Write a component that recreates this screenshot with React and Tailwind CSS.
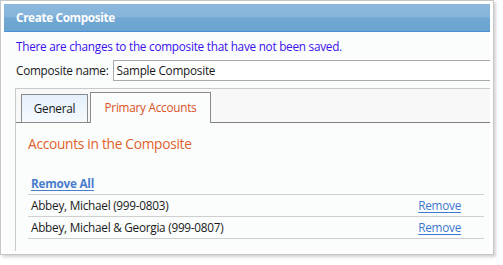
import React from "react";

const rows = [
  { name: "Abbey, Michael (999-0803)" },
  { name: "Abbey, Michael & Georgia (999-0807)" },
];

export default function App() {
  return (
    <div className="w-[503px] h-[265px] bg-white font-['Open_Sans',sans-serif] text-[11.75px] tracking-[-0.25px] text-[#1a1a1a]">
      <div className="w-[494px] h-[255px] border border-[#c6c6c6] bg-white p-[3px] shadow-[2px_2px_3px_rgba(0,0,0,0.18)] flex flex-col">
        {/* Title bar */}
        <div className="h-[28px] shrink-0 flex items-center pl-[12px] border-b border-[#4a92d6] bg-[linear-gradient(to_bottom,#8cb9dd_0%,#86b4da_48%,#70a7d3_52%,#6ca4d1_100%)]">
          <span className="text-white font-bold text-[11.75px] tracking-[-0.35px]">Create Composite</span>
        </div>

        {/* Body */}
        <div className="flex-1 bg-[#fbfdfd] overflow-hidden flex flex-col pl-[12px]">
          <div className="h-[28px] flex items-center pt-[1px] text-[#3a10ee]">
            There are changes to the composite that have not been saved.
          </div>
          <div className="flex items-center h-[21px] gap-[4px]">
            <span className="whitespace-nowrap">Composite name:</span>
            <div className="h-[21px] w-[400px] shrink-0 border border-[#a9a9a9] bg-white flex items-center pl-[3px]">
              Sample Composite
            </div>
          </div>

          {/* Tab container */}
          <div className="mt-[7px] -ml-[1px] w-[500px] flex-1 border-l border-t border-[#c9c9c9] flex flex-col">
            <div className="h-[34px] bg-[#f8f8f8] border-b border-[#808080] flex items-end pl-[5px] gap-[2px]">
              <div className="h-[29px] w-[67px] -mb-[1px] border border-[#8a8a8a] bg-[linear-gradient(to_bottom,#e4f0fb,#f6fafd)] flex items-center justify-center">
                General
              </div>
              <div className="h-[31px] w-[121px] -mb-[1px] border border-b-0 border-[#8a8a8a] bg-[#fbfdfd] flex items-center justify-center text-[#d9531e]">
                Primary Accounts
              </div>
            </div>

            <div className="pl-[12px] pr-[16px]">
              <div className="h-[22px] mt-[10px] flex items-center text-[13.75px] tracking-[-0.3px] text-[#e0602a]">
                Accounts in the Composite
              </div>
              <div className="mt-[18px] w-[456px]">
                <div className="h-[22px] flex items-center pl-[3px] border-b border-[#cfcfcf]">
                  <span className="font-bold text-[#4a7ccc] underline underline-offset-2">Remove All</span>
                </div>
                {rows.map((r) => (
                  <div
                    key={r.name}
                    className="h-[22px] flex items-center justify-between pl-[3px] pr-[23px] border-b border-[#cfcfcf]"
                  >
                    <span>{r.name}</span>
                    <span className="text-[#3d78d0] underline underline-offset-2">Remove</span>
                  </div>
                ))}
              </div>
            </div>
          </div>
        </div>
      </div>
    </div>
  );
}
